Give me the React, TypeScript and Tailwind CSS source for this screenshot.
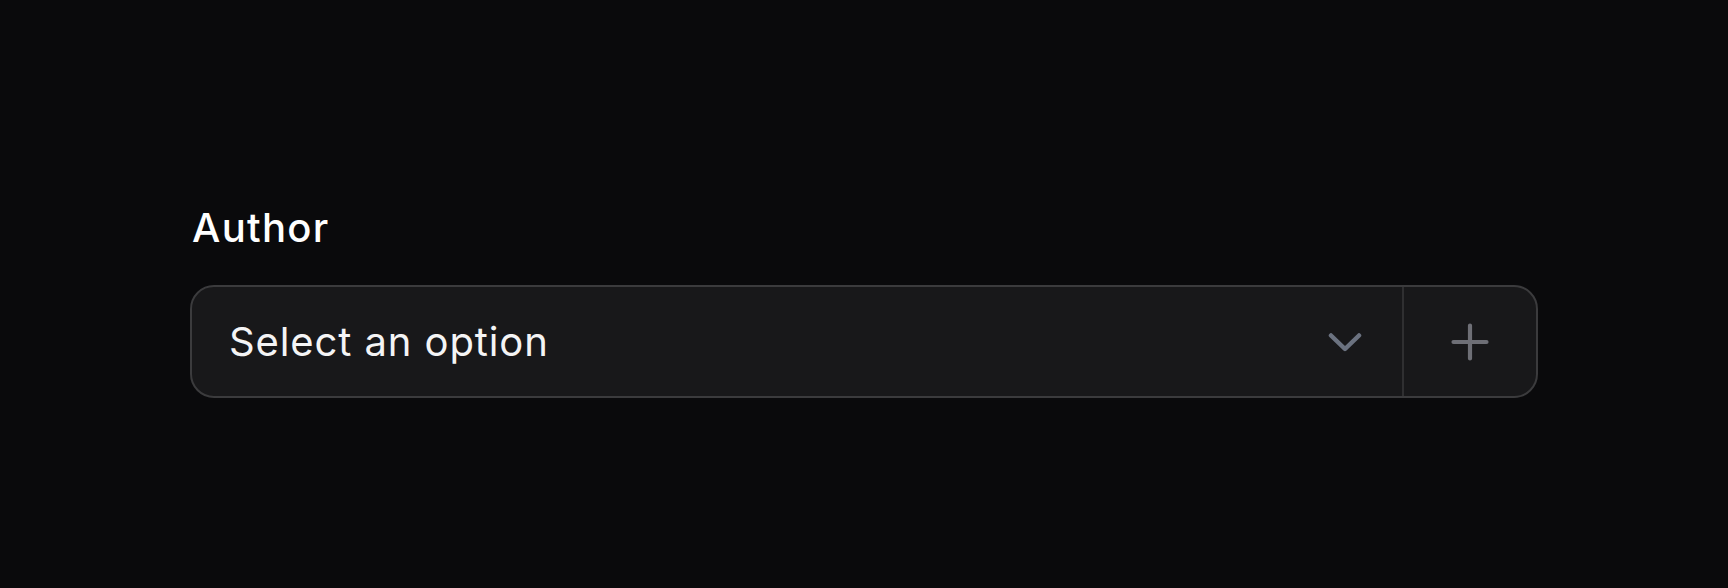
import React from 'react'

const ChevronDown = () => (
  <svg width="34" height="20" viewBox="0 0 34 20" fill="none" className="shrink-0">
    <path d="M3 3.5 L17 17 L31 3.5" stroke="#6b7280" strokeWidth="4.5" strokeLinecap="round" strokeLinejoin="round" />
  </svg>
)

const PlusIcon = () => (
  <svg width="38" height="38" viewBox="0 0 38 38" fill="none">
    <path d="M19 2.5 V35.5 M2.5 19 H35.5" stroke="#6e6f76" strokeWidth="4.2" strokeLinecap="round" />
  </svg>
)

export default function App() {
  return (
    <div className="min-h-[588px] bg-[#0a0a0c] pl-[190px] pt-[204px] font-['Inter','Noto_Sans',sans-serif]">
      <div className="flex w-[1348px] flex-col gap-[33px]">
        <label className="pl-[2px] text-[40px] leading-[48px] font-medium tracking-[1.3px] text-white">Author</label>
        <div className="flex h-[113px] items-stretch overflow-hidden rounded-[24px] border-2 border-[#3b3b3d] bg-[#18181a]">
          <button type="button" className="flex flex-1 items-center justify-between pl-[37px] pr-[40px] text-left">
            <span className="text-[40px] leading-[48px] tracking-[0.9px] text-[#f4f4f5]">Select an option</span>
            <ChevronDown />
          </button>
          <button type="button" className="flex w-[134px] items-center justify-center border-l-2 border-[#2f2f31]">
            <PlusIcon />
          </button>
        </div>
      </div>
    </div>
  )
}
